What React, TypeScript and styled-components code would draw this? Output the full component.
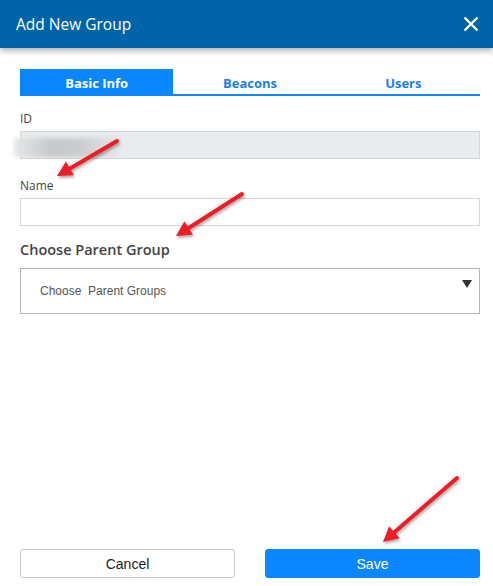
import { createGlobalStyle, styled } from 'styled-components'

const GlobalStyle = createGlobalStyle`
	html, body {
		margin: 0;
		padding: 0;
		background: #ffffff;
	}
	* {
		box-sizing: border-box;
	}
`

const StyledDialog = styled.div`
	position: relative;
	width: 493px;
	height: 586px;
	display: flex;
	flex-direction: column;
	background: #ffffff;
	font-family: 'Open Sans', 'Noto Sans', sans-serif;
	overflow: hidden;
`
const StyledHeader = styled.header`
	height: 48px;
	flex: none;
	display: flex;
	align-items: center;
	justify-content: space-between;
	padding: 0 14px 0 16px;
	background: #0064a8;
	color: #ffffff;
	box-shadow: 0 3px 6px rgba(0, 0, 0, 0.3);
	position: relative;
	z-index: 1;
`
const StyledTitle = styled.h1`
	margin: 0;
	font-size: 15.5px;
	font-weight: 400;
`
const StyledClose = styled.button`
	border: 0;
	background: none;
	padding: 0;
	width: 16px;
	height: 16px;
	display: flex;
	cursor: pointer;
`
const StyledBody = styled.div`
	flex: 1;
	display: flex;
	flex-direction: column;
	padding: 21px 13px 8px 20px;
`
const StyledTabs = styled.nav`
	display: grid;
	grid-template-columns: repeat(3, 1fr);
	border-bottom: 2px solid #0a86ff;
	height: 27px;
`
const StyledTab = styled.button<{ $active?: boolean }>`
	border: 0;
	padding: 2px 0 0;
	margin: 0;
	font-family: inherit;
	font-size: 13px;
	font-weight: 700;
	background: ${(p) => (p.$active ? '#0a86ff' : 'transparent')};
	color: ${(p) => (p.$active ? '#ffffff' : '#1a7cf0')};
	cursor: pointer;
`
const StyledForm = styled.form`
	display: flex;
	flex-direction: column;
	padding-top: 15px;
`
const StyledLabel = styled.label`
	display: block;
	font-size: 12px;
	color: #444;
	line-height: 16px;
	margin-bottom: 4px;
`
const StyledInput = styled.input<{ $disabled?: boolean; $gap?: number }>`
	display: block;
	width: 100%;
	height: 28px;
	border: 1px solid #d4d4d4;
	background: ${(p) => (p.$disabled ? '#e9ecef' : '#ffffff')};
	margin-bottom: ${(p) => p.$gap ?? 19}px;
	font-family: inherit;
	outline: none;
`
const StyledIdField = styled.div`
	position: relative;
`
const StyledBlur = styled.div`
	position: absolute;
	left: -6px;
	top: 7px;
	width: 106px;
	height: 19px;
	background: linear-gradient(90deg, #e6e8e9 0%, #c6c8c9 35%, #cbcdce 65%, #e4e6e7 100%);
	filter: blur(2px);
`
const StyledHeading = styled.h2`
	margin: 0 0 8px;
	font-size: 14.5px;
	line-height: 20px;
	font-weight: 600;
	color: #444;
`
const StyledSelect = styled.div`
	position: relative;
	height: 46px;
	border: 1px solid #b5b5b5;
	display: flex;
	align-items: center;
	padding: 0 20px 0 19px;
	font-family: 'Liberation Sans', Arial, sans-serif;
	font-size: 12px;
	color: #555;
	white-space: pre;
`
const StyledCaret = styled.span`
	position: absolute;
	right: 7px;
	top: 11px;
	width: 0;
	height: 0;
	border-left: 5.5px solid transparent;
	border-right: 5.5px solid transparent;
	border-top: 8px solid #333;
`
const StyledFooter = styled.footer`
	margin-top: auto;
	display: grid;
	grid-template-columns: 215px 215px;
	justify-content: space-between;
`
const StyledButton = styled.button<{ $primary?: boolean }>`
	height: 29px;
	border-radius: 3px;
	font-family: 'Liberation Sans', Arial, sans-serif;
	font-size: 14px;
	cursor: pointer;
	border: 1px solid ${(p) => (p.$primary ? '#0a86ff' : '#c9c9c9')};
	background: ${(p) => (p.$primary ? '#0a86ff' : '#ffffff')};
	color: ${(p) => (p.$primary ? '#ffffff' : '#222')};
`
const StyledOverlay = styled.svg`
	position: absolute;
	left: 0;
	top: 0;
	pointer-events: none;
	z-index: 2;
`

function Arrow({ x1, y1, x2, y2 }: { x1: number; y1: number; x2: number; y2: number }) {
	const a = Math.atan2(y2 - y1, x2 - x1)
	const len = 15
	const w = 8
	const bx = x2 - Math.cos(a) * len
	const by = y2 - Math.sin(a) * len
	const px = -Math.sin(a) * w
	const py = Math.cos(a) * w
	return (
		<g filter="url(#shadow)">
			<line x1={x1} y1={y1} x2={bx} y2={by} stroke="#ee1c25" strokeWidth={4} strokeLinecap="round" />
			<polygon points={`${x2},${y2} ${bx + px},${by + py} ${bx - px},${by - py}`} fill="#ee1c25" />
		</g>
	)
}

export default function App() {
	return (
		<StyledDialog>
			<GlobalStyle />
			<StyledHeader>
				<StyledTitle>Add New Group</StyledTitle>
				<StyledClose aria-label="Close">
					<svg width="16" height="16" viewBox="0 0 16 16">
						<path d="M1.5 1.5 L14.5 14.5 M14.5 1.5 L1.5 14.5" stroke="#fff" strokeWidth="2.4" />
					</svg>
				</StyledClose>
			</StyledHeader>

			<StyledBody>
				<StyledTabs>
					<StyledTab $active>Basic Info</StyledTab>
					<StyledTab>Beacons</StyledTab>
					<StyledTab>Users</StyledTab>
				</StyledTabs>

				<StyledForm>
					<StyledLabel>ID</StyledLabel>
					<StyledIdField>
						<StyledInput $disabled readOnly />
						<StyledBlur />
					</StyledIdField>

					<StyledLabel>Name</StyledLabel>
					<StyledInput $gap={14} />

					<StyledHeading>Choose Parent Group</StyledHeading>
					<StyledSelect>
						{'Choose  Parent Groups'}
						<StyledCaret />
					</StyledSelect>
				</StyledForm>

				<StyledFooter>
					<StyledButton type="button">Cancel</StyledButton>
					<StyledButton type="button" $primary>
						Save
					</StyledButton>
				</StyledFooter>
			</StyledBody>

			<StyledOverlay width="493" height="586">
				<defs>
					<filter id="shadow" x="-20%" y="-20%" width="140%" height="140%">
						<feDropShadow dx="1" dy="2" stdDeviation="1.5" floodColor="#000" floodOpacity="0.35" />
					</filter>
				</defs>
				<Arrow x1={117} y1={141} x2={57} y2={176} />
				<Arrow x1={242} y1={194} x2={176} y2={236} />
				<Arrow x1={457} y1={478} x2={383} y2={542} />
			</StyledOverlay>
		</StyledDialog>
	)
}
